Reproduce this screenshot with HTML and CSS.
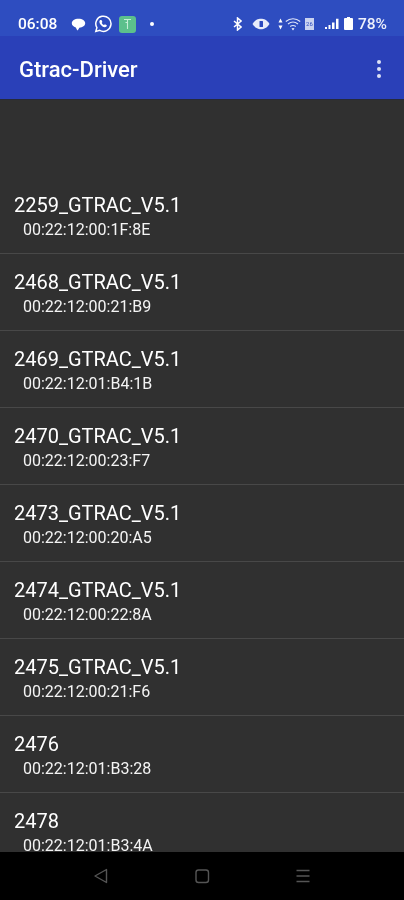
FILE: index.html
```html
<!DOCTYPE html>
<html lang="en">
<head>
  <meta charset="UTF-8">
  <meta name="viewport" content="width=device-width, initial-scale=1.0">
  <title>Gtrac-Driver</title>
  <link rel="stylesheet" href="styles.css">
</head>
<body>
  <div id="phone">
    <div id="status-bar">
      <span class="time">06:08</span>
      <svg class="ic-chat" width="15" height="13" viewBox="0 0 15 13"><path d="M7.5 .8C3.6 .8 .8 2.8 .8 5.3c0 2 1.700 3.500 4 4.100l1.500 3c.9-.6 1.600-1.700 2-2.700 3.300-.2 5.900-2 5.900-4.400 0-2.500-2.800-4.500-6.700-4.500z" fill="#fff"/></svg>
      <svg class="ic-wa" width="18" height="18" viewBox="0 0 18 18"><path d="M1.800 16.500l1.100-3.800A7.600 7.600 0 1 1 5.700 15.400z" fill="none" stroke="#fff" stroke-width="1.500"/><path d="M6.300 4.900c-.5.300-1 1-.9 2 .2 2.200 2.900 5 5.300 5.300 1 .1 1.800-.5 2-1.200l.1-.8-1.900-1-.8.900c-1-.4-2-1.400-2.400-2.400l.7-.8-.9-2z" fill="#fff"/></svg>
      <span class="app-badge"><svg width="9" height="12" viewBox="0 0 9 12"><path d="M1 1.500h7M4.500 1.500v9.500M2.500 4.500h2" fill="none" stroke="#c4eed6" stroke-width="1.100"/></svg></span>
      <span class="dot"></span>
      <span class="status-right">
        <svg width="9" height="14" viewBox="0 0 9 14"><path d="M1 4l7 6-3.500 3V1L8 4l-7 6" fill="none" stroke="#fff" stroke-width="1.500"/></svg>
        <svg class="ic-vib" width="18" height="12" viewBox="0 0 18 12"><path d="M.5 6C3 2 6 .8 9 .8S15 2 17.500 6C15 10 12 11.200 9 11.200S3 10 .5 6z" fill="#e8ecfa"/><rect x="7.500" y="3" width="3.500" height="6" rx=".5" fill="#2b49bf"/></svg>
        <svg class="ic-arrows" width="5" height="12" viewBox="0 0 5 12"><path d="M2.500 .5L4.500 4.500H.5zM2.500 11.500L.5 7.500h4z" fill="#fff"/></svg>
        <svg class="ic-wifi" width="16" height="13" viewBox="0 0 16 13"><path d="M.8 3.500c4.200-3.600 10.200-3.600 14.400 0M3 6c3-2.400 7-2.400 10 0M5.200 8.500c1.700-1.200 3.900-1.200 5.600 0" fill="none" stroke="#dfe5f8" stroke-width="1.100"/><path d="M8 12.500l-1.500-2.300h3z" fill="#fff"/></svg>
        <span class="ic-sim">26</span>
        <svg class="ic-signal" width="15" height="12" viewBox="0 0 15 12"><path d="M1 9h2v2H1zM4.500 7h2v4h-2zM8 4.500h2.500V11H8zM12 .8h2.500V11H12z" fill="#fff"/></svg>
        <span class="battery"></span>
        <span class="pct">78%</span>
      </span>
    </div>

    <div id="app-bar">
      <span class="title">Gtrac-Driver</span>
      <span class="more"><i></i><i></i><i></i></span>
    </div>

    <div id="device-list">
      <div class="device"><div class="name">2259_GTRAC_V5.1</div><div class="mac">00:22:12:00:1F:8E</div></div>
      <div class="device"><div class="name">2468_GTRAC_V5.1</div><div class="mac">00:22:12:00:21:B9</div></div>
      <div class="device"><div class="name">2469_GTRAC_V5.1</div><div class="mac">00:22:12:01:B4:1B</div></div>
      <div class="device"><div class="name">2470_GTRAC_V5.1</div><div class="mac">00:22:12:00:23:F7</div></div>
      <div class="device"><div class="name">2473_GTRAC_V5.1</div><div class="mac">00:22:12:00:20:A5</div></div>
      <div class="device"><div class="name">2474_GTRAC_V5.1</div><div class="mac">00:22:12:00:22:8A</div></div>
      <div class="device"><div class="name">2475_GTRAC_V5.1</div><div class="mac">00:22:12:00:21:F6</div></div>
      <div class="device"><div class="name">2476</div><div class="mac">00:22:12:01:B3:28</div></div>
      <div class="device"><div class="name">2478</div><div class="mac">00:22:12:01:B3:4A</div></div>
    </div>

    <div id="nav-bar">
      <svg width="16" height="16" viewBox="0 0 16 16"><path d="M13.500 1.500v13L2 8z" fill="none" stroke="#555" stroke-width="1.400" stroke-linejoin="round"/></svg>
      <svg width="16" height="16" viewBox="0 0 16 16"><rect x="2" y="2" width="12.500" height="12.500" rx="2.500" fill="none" stroke="#555" stroke-width="1.400"/></svg>
      <svg width="16" height="16" viewBox="0 0 16 16"><path d="M1.500 2.500h13M1.500 8h13M1.500 13.500h13" fill="none" stroke="#555" stroke-width="1.400"/></svg>
    </div>
  </div>
</body>
</html>
```

FILE: styles.css
```css
body {
  margin: 0;
  padding: 0;
  background-color: #000;
  font-family: Roboto, sans-serif;
  color: white;
}

#phone {
  display: flex;
  flex-direction: column;
  width: 404px;
  height: 900px;
  overflow: hidden;
  filter: blur(0.4px); /* the reference is a soft, upscaled capture */
}

#status-bar {
  display: flex;
  align-items: center;
  flex: none;
  height: 36px;
  padding: 12px 17px 0 18px;
  box-sizing: border-box;
  background-color: #2e4dc0;
}

.time {
  flex: none;
  font-size: 15.5px;
  font-weight: 500;
  width: 41px;
}

.ic-chat {
  margin-left: 12px;
}

.ic-wa {
  margin-left: 8px;
}

.app-badge {
  display: flex;
  align-items: center;
  justify-content: center;
  width: 17px;
  height: 17px;
  margin-left: 7px;
  border-radius: 3px;
  background-color: #5cc08c;
}

.dot {
  width: 4px;
  height: 4px;
  margin-left: 14px;
  border-radius: 50%;
  background-color: white;
}

.status-right {
  display: flex;
  align-items: center;
  margin-left: auto;
}

.ic-vib {
  margin-left: 10px;
}

.ic-arrows {
  margin-left: 8px;
}

.ic-wifi {
  margin-left: 2px;
}

.ic-sim {
  width: 9px;
  height: 12px;
  margin-left: 4px;
  font-size: 6px;
  line-height: 12px;
  text-align: center;
  color: #2e4dc0;
  background-color: #c9d2f0;
}

.ic-signal {
  margin-left: 10px;
}

.battery {
  position: relative;
  width: 9px;
  height: 12px;
  margin-left: 5px;
  border-radius: 1px;
  background-color: white;
}

.battery::before {
  content: "";
  position: absolute;
  top: -1px;
  left: 3px;
  width: 3px;
  height: 1px;
  background-color: white;
}

.pct {
  margin-left: 5px;
  font-size: 15.5px;
  font-weight: 500;
  color: #eef1fb;
}

#app-bar {
  display: flex;
  align-items: center;
  justify-content: space-between;
  flex: none;
  height: 64px;
  padding: 3px 23px 0 19px;
  box-sizing: border-box;
  background-color: #2a40b8;
  border-bottom: 1px solid #262a3a;
}

.title {
  font-size: 22px;
  font-weight: 500;
}

.more {
  display: flex;
  flex-direction: column;
  gap: 3px;
}

.more i {
  display: block;
  width: 4px;
  height: 4px;
  border-radius: 50%;
  background-color: #dde2f5;
}

#device-list {
  flex: 1;
  min-height: 0;
  overflow: hidden;
  padding-top: 77px;
  background-color: #303030;
}

.device {
  height: 77px;
  box-sizing: border-box;
  padding: 16px 14px 0;
  border-bottom: 1px solid #484848;
}

.name {
  font-size: 20px;
  line-height: 24px;
  color: #fff;
}

.mac {
  margin-top: 3px;
  padding-left: 9px;
  font-size: 16px;
  line-height: 20px;
  color: #f4f4f4;
}

#nav-bar {
  display: flex;
  align-items: center;
  justify-content: space-between;
  flex: none;
  height: 48px;
  padding: 0 93px;
  box-sizing: border-box;
  background-color: #000;
}
```
